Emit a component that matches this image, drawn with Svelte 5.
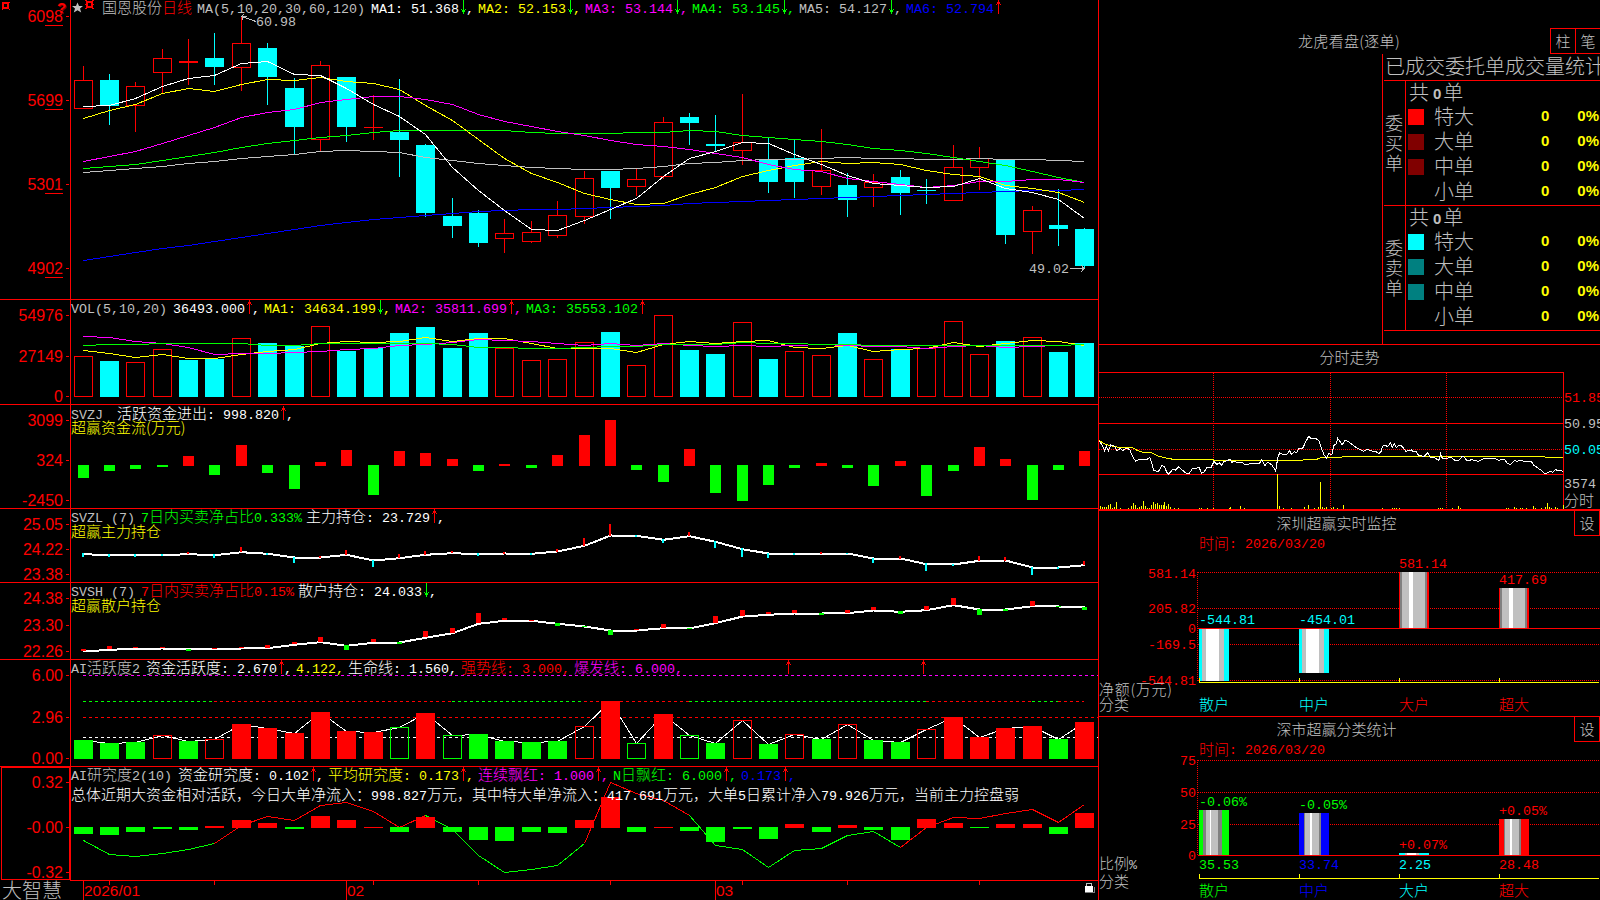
<script>
  const RED = '#ff0000';
  const GREEN = '#00ff00';
  const CYAN = '#00ffff';
  const YELLOW = '#ffff00';
  const MAGENTA = '#ff00ff';
  const BLUE = '#0000ff';
  const GRAY = '#c0c0c0';
  const WHITE = '#ffffff';

  // left edge of each trading day's 19px slot
  const X = [
    74, 100, 126, 153, 179, 205, 232, 258, 285, 311, 337, 364, 390, 416, 443, 469, 495, 522, 548, 575,
    601, 627, 654, 680, 706, 733, 759, 785, 812, 838, 864, 891, 917, 944, 970, 996, 1023, 1049, 1075
  ];

  // [color, high, body top, body bottom, low]
  const candles = [
    ['r', 66, 80, 109, 109], ['c', 74, 80, 106, 125], ['r', 82, 86, 106, 132], ['r', 49, 58, 73, 93],
    ['r', 39, 61, 63, 85], ['c', 33, 58, 67, 85], ['r', 17, 43, 68, 91], ['c', 43, 48, 77, 105],
    ['c', 78, 88, 127, 154], ['r', 61, 65, 140, 152], ['c', 77, 77, 127, 142], ['r', 95, 127, 128, 140],
    ['c', 79, 132, 140, 177], ['c', 144, 145, 213, 217], ['c', 198, 216, 226, 238], ['c', 210, 213, 243, 247],
    ['r', 219, 233, 239, 253], ['r', 221, 232, 242, 243], ['r', 201, 215, 236, 238], ['r', 171, 178, 217, 224],
    ['c', 171, 171, 188, 219], ['r', 169, 179, 187, 196], ['r', 117, 122, 177, 179], ['c', 113, 117, 123, 145],
    ['c', 115, 144, 146, 151], ['r', 94, 142, 151, 165], ['c', 137, 160, 182, 193], ['c', 139, 158, 182, 198],
    ['r', 129, 170, 187, 195], ['c', 173, 185, 200, 217], ['r', 174, 182, 188, 207], ['c', 170, 177, 193, 215],
    ['c', 179, 190, 191, 204], ['r', 145, 167, 201, 201], ['r', 147, 158, 168, 190], ['c', 160, 160, 235, 244],
    ['r', 206, 210, 232, 254], ['c', 189, 225, 229, 246], ['c', 228, 229, 266, 268]
  ];

  const priceLines = [
    { color: BLUE, ys: [260, 256, 252, 248, 245, 241, 237, 233, 229, 225, 222, 219, 217, 215, 213, 211, 210, 209, 209, 208, 207, 206, 205, 203, 202, 201, 200, 199, 198, 197, 196, 195, 194, 193, 192, 191, 190, 190, 189] },
    { color: GRAY, ys: [172, 170, 168, 166, 163, 161, 158, 156, 154, 151, 150, 151, 152, 157, 160, 163, 165, 167, 168, 169, 169, 168, 166, 163, 162, 160, 159, 159, 158, 157, 158, 158, 159, 159, 158, 159, 159, 160, 161] },
    { color: GREEN, ys: [168, 166, 164, 160, 156, 152, 147, 143, 140, 137, 135, 132, 130, 130, 130, 130, 130, 132, 133, 133, 133, 132, 132, 130, 131, 135, 137, 139, 141, 144, 148, 150, 153, 157, 161, 165, 171, 177, 182] },
    { color: YELLOW, ys: [118, 110, 104, 93, 88, 91, 84, 79, 80, 77, 81, 83, 89, 105, 120, 139, 158, 173, 182, 193, 199, 204, 203, 194, 187, 176, 170, 165, 161, 163, 162, 164, 170, 174, 176, 185, 188, 192, 202] },
    { color: MAGENTA, ys: [161, 156, 151, 143, 135, 127, 117, 112, 109, 102, 99, 96, 96, 99, 104, 114, 121, 126, 131, 135, 140, 144, 146, 149, 153, 157, 164, 169, 171, 178, 181, 184, 187, 185, 181, 181, 179, 179, 182] },
    { color: WHITE, ys: [106, 105, 98, 86, 78, 75, 63, 61, 74, 75, 88, 104, 116, 134, 167, 190, 210, 229, 230, 220, 209, 198, 176, 158, 151, 142, 143, 154, 164, 175, 183, 185, 187, 186, 178, 188, 192, 199, 218] }
  ];

  const volColors = 'rcrrccrccrccccccrrrrcrrccrcrrcrcrrrcrcc';
  const volTops = [356, 361, 362, 349, 360, 359, 338, 343, 346, 326, 351, 348, 333, 327, 348, 333, 348, 360, 359, 342, 332, 365, 315, 350, 354, 322, 359, 351, 355, 333, 359, 349, 348, 321, 354, 341, 337, 352, 343];
  const volLines = [
    { color: YELLOW, ys: [350, 353, 357, 354, 358, 358, 354, 351, 349, 343, 341, 342, 341, 337, 341, 338, 338, 343, 348, 348, 348, 352, 344, 341, 343, 341, 340, 347, 348, 345, 351, 349, 348, 342, 346, 343, 340, 341, 345] },
    { color: MAGENTA, ys: [336, 337, 341, 343, 347, 354, 353, 353, 352, 351, 349, 348, 345, 344, 342, 339, 340, 341, 343, 345, 343, 345, 343, 345, 346, 345, 346, 345, 344, 345, 346, 346, 348, 346, 345, 347, 346, 345, 344] },
    { color: GREEN, ys: [345, 344, 344, 343, 343, 343, 343, 345, 345, 343, 343, 343, 343, 343, 344, 347, 347, 348, 348, 347, 346, 346, 344, 344, 344, 342, 343, 343, 344, 344, 345, 345, 345, 345, 345, 345, 345, 345, 344] }
  ];

  // tip of each bar, above or below the zero line at 465
  const flow = [478, 471, 469, 467, 456, 475, 445, 473, 489, 462, 450, 495, 451, 453, 459, 471, 464, 468, 455, 435, 420, 470, 482, 449, 493, 501, 485, 468, 463, 468, 486, 461, 496, 471, 447, 459, 500, 470, 451];

  const mainLine = [553.7, 554.7, 554.7, 554.7, 553.7, 554.7, 551.7, 553.3, 557, 557, 554.3, 560, 557.7, 554.3, 552.7, 553.7, 553, 553.3, 551, 545.3, 535, 535.3, 539.3, 535.7, 541.3, 548.7, 553, 553, 553, 553, 558, 558, 563.7, 564, 560.3, 560, 567, 567, 564.7];
  const mainTips = [557, 557, 557, 556, 552, 558, 547, 555, 563, 556, 550, 567, 554, 551, 551, 556, 552, 555, 549, 538, 524, 537, 543, 532, 548, 557, 558, 555, 552, 554, 563, 556, 571, 566, 556, 557, 575, 569, 561];
  const mainColors = 'ccccrcrccrrcrrrcrcrrrccrccccrccrccrrccr';

  const retailLine = [651, 649.3, 648.3, 648, 649, 648.7, 648, 647.7, 644.3, 641.7, 645.3, 642.3, 642, 637.3, 632.7, 623.3, 620.3, 620.3, 623.3, 626, 630, 630, 627.7, 628, 622.7, 616, 614.3, 613, 613, 612.7, 610, 611.3, 609.7, 604.7, 609, 609, 605.7, 606, 607];
  const retailTips = [649, 646, 647, 647, 651, 648, 647, 645, 642, 637, 650, 639, 644, 631, 628, 613, 618, 620, 626, 626, 635, 629, 624, 629, 616, 610, 612, 610, 615, 610, 607, 614, 606, 598, 615, 611, 601, 607, 610];
  const retailColors = 'rrrrgrrrrrgrgrrrrrgggrrgrrrrgrrgrrggrgg';

  // upper case is filled, lower case is outlined
  const activeKinds = 'GGGrGrRRRRRRgRgGGGGrRgRgGrGrGrGGrRRRRGR';
  const activeTops = [740, 743, 742, 735, 741, 739, 724, 728, 733, 712, 731, 732, 727, 713, 735, 734, 741, 742, 741, 726, 701, 743, 714, 735, 743, 720, 744, 734, 739, 724, 740, 742, 729, 717, 737, 728, 726, 739, 722];
  const activeBands = [
    [83, 214, GREEN], [214, 452, RED], [452, 584, GREEN], [584, 689, RED],
    [689, 926, GREEN], [926, 1032, RED], [1032, 1058, GREEN], [1058, 1084, RED]
  ];

  const researchTips = [834, 835, 832, 829, 830, 826, 820, 823, 829, 816, 820, 827, 832, 817, 832, 840, 841, 832, 833, 820, 797, 832, 827, 831, 842, 829, 839, 824, 832, 825, 830, 840, 819, 823, 828, 824, 824, 834, 813];
  const researchLine = [840, 854, 856, 853, 849, 843, 825, 816, 820, 805, 802, 811, 827, 815, 829, 855, 872, 869, 865, 843, 782, 793, 800, 815, 845, 849, 867, 850, 848, 835, 831, 847, 827, 817, 818, 813, 809, 822, 804];
  const researchParts = [[0, 5, GREEN], [5, 13, RED], [13, 19, GREEN], [19, 23, RED], [23, 31, GREEN], [31, 38, RED]];

  // intraday samples in thirds of a pixel, measured from (1096, 420)
  const intraday = '10,62 18,75 26,92 31,78 37,93 44,75 55,78 62,92 74,85 80,92 90,85 101,88 110,110 119,124 130,118 145,120 155,117 161,112 165,122 173,151 185,155 191,150 197,137 206,140 212,157 218,163 230,148 238,150 248,140 258,150 270,159 280,160 290,145 298,147 309,141 317,160 325,155 333,143 345,143 354,124 363,133 370,128 376,136 384,125 398,120 402,117 407,127 415,124 425,129 438,126 446,134 465,131 490,130 497,120 507,136 516,126 528,135 539,153 545,115 551,98 560,103 574,102 581,92 586,103 595,95 602,99 608,86 620,85 628,68 638,49 645,56 656,54 668,61 675,82 684,104 691,114 698,101 708,103 713,76 720,73 725,55 733,66 738,76 747,61 757,64 770,75 782,83 802,94 814,88 827,93 839,94 847,100 854,98 860,78 867,75 875,80 884,68 889,82 895,70 901,82 908,76 917,78 930,94 946,90 952,95 959,93 967,105 976,107 983,110 995,98 1002,112 1015,112 1028,122 1034,101 1039,115 1051,117 1058,113 1063,111 1077,121 1090,120 1098,109 1104,110 1113,123 1127,119 1147,124 1162,116 1182,117 1197,115 1207,121 1217,119 1226,118 1232,128 1242,134 1257,121 1262,124 1274,120 1287,126 1300,124 1307,126 1314,136 1327,145 1337,152 1347,162 1357,157 1364,153 1370,157 1379,149 1387,152 1397,151 1401,157';
  const average = '10,62 30,74 45,77 62,81 108,82 125,92 140,97 165,98 185,108 210,114 232,118 352,118 354,121 620,121 625,118 662,118 675,113 738,112 739,109 1346,109 1348,112 1401,112';
  const ticks = [
    [13, 3], [19, 2], [25, 2], [31, 2], [37, 4], [43, 5], [49, 1], [55, 2], [61, 7], [73, 1], [97, 1], [106, 3], [112, 6], [118, 4],
    [124, 1], [130, 2], [136, 3], [142, 8], [148, 3], [154, 1], [160, 1], [166, 4], [172, 7], [178, 5], [184, 6], [190, 4], [196, 4],
    [202, 4], [205, 7], [211, 3], [217, 5], [223, 2], [235, 1], [247, 1], [311, 1], [317, 1], [334, 1], [352, 1], [400, 1], [403, 2],
    [433, 3], [445, 1], [544, 35], [550, 3], [562, 1], [586, 1], [625, 2], [637, 4], [655, 1], [667, 2], [673, 27], [679, 2], [685, 1],
    [691, 2], [706, 1], [712, 2], [724, 1], [742, 4], [859, 1], [889, 1], [895, 1], [901, 1], [910, 1], [1027, 1], [1033, 1], [1039, 1],
    [1069, 1], [1087, 3], [1093, 1], [1231, 1], [1237, 1], [1255, 2], [1261, 1], [1273, 1], [1279, 1], [1291, 1], [1312, 3], [1318, 1],
    [1336, 1], [1348, 2], [1354, 6], [1360, 2], [1366, 1], [1378, 2], [1384, 1], [1401, 4]
  ];

  const orders = [
    { side: '委买单', rows: [['特大', '#ff0000'], ['大单', '#800000'], ['中单', '#800000'], ['小单', '']] },
    { side: '委卖单', rows: [['特大', '#00ffff'], ['大单', '#008080'], ['中单', '#008080'], ['小单', '']] }
  ];

  // cylinder shading: [width, color] stripes from left to right, 30px in total
  const D = '#808080';
  const netBars = [
    { x: 1199, y: 629, h: 52, name: '散户', value: '-544.81', ly: 624, color: CYAN, stripes: [[3, CYAN], [4, GRAY], [13, WHITE], [5, GRAY], [5, CYAN]] },
    { x: 1299, y: 629, h: 44, name: '中户', value: '-454.01', ly: 624, color: CYAN, stripes: [[3, CYAN], [4, GRAY], [13, WHITE], [5, GRAY], [5, CYAN]] },
    { x: 1399, y: 572, h: 56, name: '大户', value: '581.14', ly: 568, color: RED, stripes: [[1, RED], [2, D], [7, GRAY], [4, WHITE], [12, GRAY], [2, D], [2, RED]] },
    { x: 1499, y: 588, h: 40, name: '超大', value: '417.69', ly: 584, color: RED, stripes: [[1, RED], [2, D], [7, GRAY], [4, WHITE], [12, GRAY], [2, D], [2, RED]] }
  ];
  const shareBars = [
    { x: 1199, y: 810, name: '散户', value: '35.53', change: '-0.06%', ly: 806, color: GREEN, tint: GREEN, stripes: [[4, GREEN], [3, D], [4, GRAY], [1, WHITE], [7, GRAY], [4, D], [7, GREEN]] },
    { x: 1299, y: 813, name: '中户', value: '33.74', change: '-0.05%', ly: 809, color: BLUE, tint: GREEN, stripes: [[5, BLUE], [1, D], [5, GRAY], [2, WHITE], [7, GRAY], [2, D], [8, BLUE]] },
    { x: 1399, y: 853, name: '大户', value: '2.25', change: '+0.07%', ly: 849, color: CYAN, tint: RED, stripes: [[6, CYAN], [2, GRAY], [9, WHITE], [3, GRAY], [10, CYAN]] },
    { x: 1499, y: 819, name: '超大', value: '28.48', change: '+0.05%', ly: 815, color: RED, tint: RED, stripes: [[5, RED], [1, D], [5, GRAY], [2, WHITE], [7, GRAY], [2, D], [8, RED]] }
  ];

  const fill = { r: RED, c: CYAN, g: GREEN };

  function points( ys, from = 0, to = ys.length - 1 ) {
    return ys.slice( from, to + 1 ).map( ( y, i ) => `${X[from + i] + 9.5},${y + 0.5}` ).join( ' ' );
  }

  // latin runs and CJK runs are set at different sizes
  function runs( text ) {
    return text.split( /([\u0020-\u00ff]+)/ ).filter( Boolean ).map( part => ( { part, cjk: part.charCodeAt( 0 ) > 255 } ) );
  }

  function stack( stripes ) {
    let at = 0;
    return stripes.map( ( [w, color] ) => {
      const stripe = { at, w, color };
      at += w;
      return stripe;
    } );
  }
</script>

{#snippet mixed(text)}{#each runs( text ) as run}<span class:cjk={run.cjk}>{run.part}</span>{/each}{/snippet}

{#snippet item(text, color, dir = '')}
  <span class="item {color}">{@render mixed( text )}{#if dir}<svg class="arrow" width="7" height="14" viewBox="0 0 7 14">
      {#if dir === 'up'}
        <path d="M4 0h1v14h-1zM3 2h3v2h-3zM2 4h1v1h-1zM6 4h1v1h-1z" fill={RED} />
      {:else}
        <path d="M4 0h1v14h-1zM3 10h3v2h-3zM2 9h1v1h-1zM6 9h1v1h-1z" fill={GREEN} />
      {/if}
    </svg>{/if}</span>
{/snippet}

{#snippet axis(top, height, labels)}
  <rect x="70" y={top} width="1" height={height} fill={RED} />
  {#each labels as [text, y]}
    <text class="scale" x="63" y={y}>{text}</text>
    <rect x="66" y={y - 6} width="3" height="1" fill={RED} />
  {/each}
{/snippet}

{#snippet cylinder(x, y, h, stripes)}
  {#each stack( stripes ) as s}
    <rect x={x + s.at} y={y} width={s.w} height={h} fill={s.color} />
  {/each}
{/snippet}

<main>
  <div class="left">
    <section class="panel price">
      <svg viewBox="0 0 1098 299" width="1098" height="299">
        {@render axis( 0, 299, [['6098', 22], ['5699', 106], ['5301', 190], ['4902', 274]] )}
        {#each [25, 109, 193, 277] as y}
          <rect x="45" y={y} width="18" height="1" fill={RED} />
        {/each}
        <path d="M2 2h7v7h-7zM4 4v3h3v-3z" fill={RED} fill-rule="evenodd" />
        <path d="M2 9h1v1h-1zM9 9h1v1h-1zM9 2h1v1h-1z" fill={RED} />
        <text class="help dark" x="58" y="14">?</text>
        <text class="help" x="57" y="13">?</text>
        {#each candles as [kind, high, top, bottom, low], i}
          {@const body = bottom - top}
          <rect x={X[i] + 9} y={high} width="1" height={top - high} fill={fill[kind]} />
          <rect x={X[i] + 9} y={bottom} width="1" height={low - bottom} fill={fill[kind]} />
          {#if kind === 'c' || body < 3}
            <rect x={X[i]} y={top} width="19" height={body} fill={fill[kind]} />
          {:else}
            <rect x={X[i] + 0.5} y={top + 0.5} width="18" height={body - 1} class="hollow" stroke={RED} />
          {/if}
        {/each}
        {#each priceLines as line}
          <polyline points={points( line.ys )} stroke={line.color} />
        {/each}
        <path d="M241.500 16.500L256 21.500M241.500 16.500h5M242.500 16.500v3M242 16l2-2" stroke={GRAY} />
        <text class="mono" x="256" y="26" fill={GRAY}>60.98</text>
        <text class="mono" x="1029" y="273" fill={GRAY}>49.02</text>
        <path d="M1070 268.500h14M1081 265l3 3.500-3 3.500" stroke={GRAY} />
      </svg>
      <header>
        <svg class="marks" width="27" height="14" viewBox="71 0 27 14">
          <path class="star" d="M77.500 2.500l1.500 3.500h4l-3 2.500 1.200 4-3.700-2.300-3.700 2.300 1.200-4-3-2.500h4z" fill={GRAY} />
          <path d="M86 1h7v7h-7zM88 3v3h3v-3z" fill={RED} fill-rule="evenodd" />
          <path d="M85 0h2v1h-2zM92 0h2v1h-2zM85 8h2v1h-2zM92 8h2v1h-2zM85 4h1v1h-1zM93 4h1v1h-1z" fill={RED} />
        </svg>
        <span class="stock">{@render mixed( '国恩股份' )}<i>{@render mixed( '日线' )}</i></span>
        <span class="name">{@render mixed( 'MA(5,10,20,30,60,120)' )}</span>
        {@render item( 'MA1: 51.368', 'white comma', 'down' )}
        {@render item( 'MA2: 52.153', 'yellow comma', 'down' )}
        {@render item( 'MA3: 53.144', 'magenta comma', 'down' )}
        {@render item( 'MA4: 53.145', 'green comma', 'down' )}
        {@render item( 'MA5: 54.127', 'gray comma', 'down' )}
        {@render item( 'MA6: 52.794', 'blue', 'up' )}
      </header>
    </section>

    <section class="panel volume">
      <svg viewBox="0 300 1098 104" width="1098" height="104">
        {@render axis( 300, 104, [['54976', 321], ['27149', 362], ['0', 402]] )}
        {#each volTops as top, i}
          {#if volColors[i] === 'c'}
            <rect x={X[i]} y={top} width="19" height={397 - top} fill={CYAN} />
          {:else}
            <rect x={X[i] + 0.5} y={top + 0.5} width="18" height={396 - top} class="hollow" stroke={RED} />
          {/if}
        {/each}
        {#each volLines as line}
          <polyline points={points( line.ys )} stroke={line.color} />
        {/each}
      </svg>
      <header>
        <span class="name">{@render mixed( 'VOL(5,10,20)' )}</span>
        {@render item( '36493.000', 'white comma', 'up' )}
        {@render item( 'MA1: 34634.199', 'yellow comma', 'down' )}
        {@render item( 'MA2: 35811.699', 'magenta comma', 'up' )}
        {@render item( 'MA3: 35553.102', 'green', 'up' )}
      </header>
    </section>

    <section class="panel flow">
      <svg viewBox="0 405 1098 103" width="1098" height="103">
        {@render axis( 405, 103, [['3099', 426], ['324', 466], ['-2450', 506]] )}
        {#each flow as tip, i}
          {#if tip > 465}
            <rect x={X[i] + 4} y="465" width="11" height={tip - 465} fill={GREEN} />
          {:else}
            <rect x={X[i] + 4} y={tip} width="11" height={466 - tip} fill={RED} />
          {/if}
        {/each}
      </svg>
      <header>
        <span class="name">{@render mixed( 'SVZJ ' )}</span>
        {@render item( '活跃资金进出: 998.820', 'white comma', 'up' )}
        <p class="yellow"><span class="cjk">超赢资金流(万元)</span></p>
      </header>
    </section>

    <section class="panel main-holding">
      <svg viewBox="0 509 1098 73" width="1098" height="73">
        {@render axis( 509, 73, [['25.05', 530], ['24.22', 555], ['23.38', 580]] )}
        <polyline class="thick" points={points( mainLine )} stroke={WHITE} />
        {#each mainTips as tip, i}
          <rect x={X[i] + 8} y={Math.min( tip, mainLine[i] - 0.5 )} width="2" height={Math.max( 1, Math.abs( tip - mainLine[i] ) + 0.5 )} fill={fill[mainColors[i]]} />
        {/each}
      </svg>
      <header>
        <span class="name">{@render mixed( 'SVZL (7)' )}</span>
        {@render item( '7日内买卖净占比0.333%', 'green' )}
        {@render item( '主力持仓: 23.729', 'white comma', 'up' )}
        <p class="yellow">{@render mixed( '超赢主力持仓' )}</p>
      </header>
    </section>

    <section class="panel retail-holding">
      <svg viewBox="0 583 1098 76" width="1098" height="76">
        {@render axis( 583, 76, [['24.38', 604], ['23.30', 631], ['22.26', 657]] )}
        <polyline class="thick" points={points( retailLine )} stroke={WHITE} />
        {#each retailTips as tip, i}
          <rect x={X[i] + 7} y={Math.min( tip, retailLine[i] )} width="5" height={Math.max( 1, Math.abs( tip - retailLine[i] ) )} fill={fill[retailColors[i]]} />
        {/each}
      </svg>
      <header>
        <span class="name">{@render mixed( 'SVSH (7)' )}</span>
        {@render item( '7日内买卖净占比0.15%', 'red' )}
        {@render item( '散户持仓: 24.033', 'white comma', 'down' )}
        <p class="yellow">{@render mixed( '超赢散户持仓' )}</p>
      </header>
    </section>

    <section class="panel activity">
      <svg viewBox="0 660 1098 106" width="1098" height="106">
        {@render axis( 660, 106, [['6.00', 681], ['2.96', 723], ['0.00', 764]] )}
        <g stroke-dasharray="3 3">
          <path d="M83 675.500H1098" stroke={MAGENTA} />
          <path d="M83 717.500H1098" stroke={RED} />
          <path d="M83 737.500H1098" stroke={WHITE} />
          {#each activeBands as [from, to, color]}
            <path d="M{from} 701.500H{to}" stroke={color} />
          {/each}
        </g>
        <polyline points={points( activeTops )} stroke={WHITE} />
        {#each activeTops as top, i}
          {@const kind = activeKinds[i]}
          {@const color = fill[kind.toLowerCase()]}
          {#if kind === kind.toUpperCase()}
            <rect x={X[i]} y={top} width="19" height={759 - top} fill={color} />
          {:else}
            <rect x={X[i] + 0.5} y={top + 0.5} width="18" height={758 - top} class="hollow" stroke={color} />
          {/if}
        {/each}
        {#each [788, 923] as x}
          <path transform="translate({x - 4} 660)" d="M4 0h1v14h-1zM3 2h3v2h-3zM2 4h1v1h-1zM6 4h1v1h-1z" fill={RED} />
        {/each}
      </svg>
      <header>
        <span class="name">{@render mixed( 'AI活跃度2' )}</span>
        {@render item( '资金活跃度: 2.670', 'white comma', 'up' )}
        {@render item( '4.122', 'yellow comma' )}
        {@render item( '生命线: 1.560', 'white comma' )}
        {@render item( '强势线: 3.000', 'red comma' )}
        {@render item( '爆发线: 6.000', 'magenta comma' )}
      </header>
    </section>

    <section class="panel research">
      <svg viewBox="0 767 1098 113" width="1098" height="113">
        {@render axis( 767, 113, [['0.32', 788], ['-0.00', 833], ['-0.32', 878]] )}
        <rect x="1.5" y="767.5" width="68" height="112" class="hollow" stroke={RED} />
        {#each researchParts as [from, to, color]}
          <polyline points={points( researchLine, from, to )} stroke={color} />
        {/each}
        {#each researchTips as tip, i}
          {#if tip > 827}
            <rect x={X[i]} y="827" width="19" height={tip - 827} fill={GREEN} />
          {:else}
            <rect x={X[i]} y={tip} width="19" height={828 - tip} fill={RED} />
          {/if}
        {/each}
      </svg>
      <header>
        <span class="name">{@render mixed( 'AI研究度2(10)' )}</span>
        {@render item( '资金研究度: 0.102', 'white comma', 'up' )}
        {@render item( '平均研究度: 0.173', 'yellow comma', 'up' )}
        {@render item( '连续飘红: 1.000', 'magenta comma', 'up' )}
        {@render item( 'N日飘红: 6.000', 'green comma', 'up' )}
        {@render item( '0.173', 'blue comma', 'up' )}
        <p class="summary">{@render mixed( '总体近期大资金相对活跃，今日大单净流入：998.827万元，其中特大单净流入：417.691万元，大单5日累计净入79.926万元，当前主力控盘弱' )}</p>
      </header>
    </section>

    <footer>
      <span class="brand">大智慧</span>
      <svg viewBox="70 880 1028 20" width="1028" height="20">
        <rect x="70" y="880" width="1028" height="1" fill={RED} />
        {#each [[83, '2026/01'], [346, '02'], [715, '03']] as [x, label]}
          <rect x={x} y="880" width="1" height="20" fill={RED} />
          <text class="date" x={x + 1} y="896">{label}</text>
        {/each}
        {#each [109, 214, 373, 478, 610, 742, 847, 979] as x}
          <rect x={x} y="880" width="1" height="5" fill={RED} />
        {/each}
        <path d="M1086.500 886v-2.500h5v2.500" stroke={GRAY} />
        <rect x="1085" y="886" width="8" height="6" fill={WHITE} />
        <path d="M1085 892.500h9.500v-5.500" stroke="#808080" />
      </svg>
    </footer>
  </div>

  <div class="right">
    <section class="dragon">
      <h2>龙虎看盘(逐单)</h2>
      <nav><button>柱</button><button>笔</button></nav>
      <div class="stats">
        <h3>已成交委托单成交量统计</h3>
        {#each orders as group}
          <div class="group">
            <div class="side">
              {#each group.side as ch}<span>{ch}</span>{/each}
            </div>
            <div class="rows">
              <div class="total">共<b>0</b>单</div>
              {#each group.rows as [label, color]}
                <div class="row">
                  <i style:background={color}></i>
                  <span>{label}</span>
                  <b>0</b>
                  <b class="pct">0%</b>
                </div>
              {/each}
            </div>
          </div>
        {/each}
      </div>
    </section>

    <section class="trend">
      <h2>分时走势</h2>
      <svg viewBox="1099 372 501 137" width="501" height="137">
        <g fill={RED}>
          <rect x="1099" y="372" width="465" height="1" />
          <rect x="1099" y="423" width="465" height="1" />
          <rect x="1099" y="474" width="465" height="1" />
          <rect x="1563" y="372" width="1" height="137" />
        </g>
        <g stroke={RED} stroke-dasharray="1 1">
          <path d="M1099 397.500H1563" />
          <path d="M1099 449.500H1563" />
          <path d="M1213.500 373V509" />
          <path d="M1330.500 373V509" />
          <path d="M1446.500 373V509" />
        </g>
        {#each ticks as [x, h]}
          <rect x={1096 + Math.floor( x / 3 )} y={509 - h} width="1" height={h} fill={YELLOW} />
        {/each}
        <g class="tape" transform="translate(1096 420) scale(0.33333)">
          <polyline points={average} stroke={YELLOW} />
          <polyline points={intraday} stroke={WHITE} />
        </g>
        <text class="mono" x="1564" y="402" fill={RED}>51.85</text>
        <text class="mono" x="1564" y="428" fill={GRAY}>50.95</text>
        <text class="mono" x="1564" y="454" fill={CYAN}>50.05</text>
        <text class="mono" x="1564" y="488" fill={GRAY}>3574</text>
        <text class="han" x="1564" y="506" fill={GRAY}>分时</text>
      </svg>
    </section>

    <section class="monitor">
      <div class="bar"><h2>深圳超赢实时监控</h2><button>设</button></div>
      <svg viewBox="1099 536 501 180" width="501" height="180">
        <text class="han" x="1199" y="549" fill={RED}>时间</text>
        <text class="mono" x="1229" y="548" fill={RED}>: 2026/03/20</text>
        {#each [['581.14', 578], ['205.82', 613], ['0', 633], ['-169.5', 649], ['-544.81', 685]] as [text, y]}
          <text class="mono end" x="1196" y={y} fill={RED}>{text}</text>
        {/each}
        <g stroke={RED} stroke-dasharray="1 1">
          <path d="M1197.500 572V681" />
          {#each [572, 608, 644, 680] as y}
            <path d="M1198 {y + 0.5}H1600" />
          {/each}
        </g>
        {#each netBars as bar}
          {@render cylinder( bar.x, bar.y, bar.h, bar.stripes )}
          <text class="mono" x={bar.x} y={bar.ly} fill={bar.color}>{bar.value}</text>
          <rect x={bar.x} y="678" width="1" height="4" fill={YELLOW} />
          <text class="han" x={bar.x} y="710" fill={bar.color}>{bar.name}</text>
        {/each}
        <rect x="1198" y="628" width="402" height="1" fill={RED} />
        <rect x="1199" y="682" width="400" height="1" fill={YELLOW} />
        <text class="han" x="1099" y="695" fill={GRAY} textLength="73">净额(万元)</text>
        <text class="han" x="1099" y="710" fill={GRAY}>分类</text>
      </svg>
    </section>

    <section class="share">
      <div class="bar"><h2>深市超赢分类统计</h2><button>设</button></div>
      <svg viewBox="1099 742 501 158" width="501" height="158">
        <text class="han" x="1199" y="755" fill={RED}>时间</text>
        <text class="mono" x="1229" y="754" fill={RED}>: 2026/03/20</text>
        {#each [['75', 765], ['50', 797], ['25', 829], ['0', 860]] as [text, y]}
          <text class="mono end" x="1196" y={y} fill={RED}>{text}</text>
        {/each}
        <g stroke={RED} stroke-dasharray="1 1">
          <path d="M1197.500 760V855" />
          {#each [760, 792, 824] as y}
            <path d="M1198 {y + 0.5}H1600" />
          {/each}
        </g>
        {#each shareBars as bar}
          {@render cylinder( bar.x, bar.y, 855 - bar.y, bar.stripes )}
          <text class="mono" x={bar.x} y={bar.ly} fill={bar.tint}>{bar.change}</text>
          <text class="mono" x={bar.x} y="869" fill={bar.color}>{bar.value}</text>
          <rect x={bar.x} y="874" width="1" height="4" fill={YELLOW} />
          <text class="han" x={bar.x} y="896" fill={bar.color}>{bar.name}</text>
        {/each}
        <rect x="1198" y="855" width="402" height="1" fill={RED} />
        <rect x="1199" y="878" width="400" height="1" fill={YELLOW} />
        <text class="han" x="1099" y="869" fill={GRAY}>比例</text>
        <text class="mono" x="1129" y="869" fill={GRAY}>%</text>
        <text class="han" x="1099" y="887" fill={GRAY}>分类</text>
      </svg>
    </section>
  </div>
</main>

<style>
  :global(body) {
    background: #000;
    margin: 0;
    overflow: hidden;
  }

  main {
    background: #000;
    color: #c0c0c0;
    display: flex;
    font-family: 'Liberation Mono', monospace;
    font-size: 13.33px;
    height: 900px;
    overflow: hidden;
    width: 1600px;
  }

  svg {
    display: block;
    shape-rendering: crispEdges;
  }

  polyline,
  path[stroke],
  .hollow {
    fill: none;
    stroke-width: 1;
  }

  .thick {
    stroke-width: 2;
  }

  .star {
    shape-rendering: geometricPrecision;
  }

  .tape polyline {
    vector-effect: non-scaling-stroke;
  }

  .cjk,
  .han {
    font-family: 'Noto Sans CJK SC', sans-serif;
    font-size: 15px;
    font-weight: 300;
  }

  /* keeps the tall CJK box from moving the row's baseline */
  .cjk {
    line-height: 0;
  }

  .mono {
    font-family: 'Liberation Mono', monospace;
    font-size: 13.33px;
  }

  .end {
    text-anchor: end;
  }

  .scale {
    fill: #f00;
    font: 16px 'Liberation Sans', sans-serif;
    text-anchor: end;
  }

  .date {
    fill: #f00;
    font: 15.5px 'Liberation Sans', sans-serif;
  }

  .help {
    fill: #f00;
    font: bold 15px 'Liberation Sans', sans-serif;
  }

  .help.dark {
    fill: #800000;
  }

  .left {
    border-right: 1px solid #f00;
    display: flex;
    flex-direction: column;
    width: 1098px;
  }

  .panel {
    border-bottom: 1px solid #f00;
    box-sizing: border-box;
    display: grid;
  }

  .price { height: 300px; }
  .volume { height: 105px; }
  .flow { height: 104px; }
  .main-holding { height: 74px; }
  .retail-holding { height: 77px; }
  .activity { height: 107px; }
  .research { border-bottom: 0; height: 113px; }

  .panel > svg,
  .panel > header {
    grid-area: 1 / 1;
  }

  header {
    align-content: start;
    display: flex;
    flex-wrap: wrap;
    line-height: 15px;
    padding: 2px 0 0 71px;
    white-space: pre;
  }

  header > span {
    height: 15px;
  }

  .flow header {
    padding-top: 3px;
  }

  .flow p {
    margin-top: -1px;
  }

  .marks {
    margin: -2px 4px 0 0;
  }

  .stock {
    margin-right: 5px;
  }

  .stock i {
    color: #f00;
    font-style: normal;
  }

  .name {
    margin-right: 6px;
  }

  .item {
    margin-right: 4px;
  }

  .comma::after {
    content: ',';
  }

  .arrow {
    display: inline-block;
    margin-top: -3px;
    vertical-align: -1px;
  }

  .white { color: #fff; }
  .yellow { color: #ff0; }
  .magenta { color: #f0f; }
  .green { color: #0f0; }
  .gray { color: #c0c0c0; }
  .blue { color: #00f; }
  .red { color: #f00; }

  p {
    flex-basis: 100%;
    height: 15px;
    margin: 0;
  }

  .summary {
    color: #fff;
    margin-top: 5px;
  }

  footer {
    display: flex;
    height: 20px;
  }

  .brand {
    box-sizing: border-box;
    font-family: 'Noto Sans CJK SC', sans-serif;
    font-size: 20px;
    font-weight: 300;
    line-height: 19px;
    padding-left: 2px;
    width: 70px;
  }

  .right {
    display: flex;
    flex-direction: column;
    width: 501px;
  }

  h2,
  h3 {
    font-family: 'Noto Sans CJK SC', sans-serif;
    font-size: 15px;
    font-weight: 300;
    margin: 0;
    text-align: center;
    white-space: nowrap;
  }

  button {
    background: #000;
    border: 1px solid #f00;
    box-sizing: border-box;
    color: #c0c0c0;
    font-family: 'Noto Sans CJK SC', sans-serif;
    font-size: 15px;
    font-weight: 300;
    height: 26px;
    line-height: 21px;
    padding: 0;
    width: 26px;
  }

  .dragon {
    border-bottom: 1px solid #f00;
    box-sizing: border-box;
    display: grid;
    grid-template-columns: 451px 50px;
    grid-template-rows: 26px;
    height: 345px;
    padding-top: 28px;
  }

  .dragon h2 {
    grid-area: 1 / 1;
    letter-spacing: 0.3px;
    line-height: 25px;
    padding-left: 49px;
  }

  nav {
    display: flex;
  }

  nav button {
    border-right: 0;
    flex: 0 0 25px;
    padding-bottom: 2px;
  }

  .stats {
    border-left: 1px solid #f00;
    grid-column: 1 / 3;
    height: 290px;
    margin-left: 283px;
    padding-left: 1px;
  }

  h3 {
    border-bottom: 1px solid #f00;
    font-size: 20px;
    height: 26px;
    line-height: 23px;
    overflow: hidden;
    padding-left: 1px;
    text-align: left;
  }

  .group {
    border-bottom: 1px solid #f00;
    display: flex;
    font-family: 'Noto Sans CJK SC', sans-serif;
    font-size: 20px;
    font-weight: 300;
    height: 124px;
  }

  .side {
    border-right: 1px solid #f00;
    box-sizing: border-box;
    display: flex;
    flex-direction: column;
    font-size: 18px;
    justify-content: center;
    line-height: 20px;
    padding: 0 0 3px 1px;
    width: 22px;
  }

  .rows {
    flex: 1;
  }

  .total {
    height: 23px;
    line-height: 21px;
    padding-left: 3px;
  }

  .rows b {
    font-family: 'Liberation Sans', sans-serif;
    font-size: 15px;
    font-weight: bold;
  }

  .total b {
    padding: 0 2px 0 4px;
    position: relative;
    top: -1px;
  }

  .row {
    align-items: center;
    display: flex;
    height: 25px;
    line-height: 23px;
  }

  .row i {
    height: 16px;
    margin: 0 10px 0 2px;
    width: 16px;
  }

  .row span {
    height: 25px;
    width: 107px;
  }

  .row b {
    color: #ff0;
    height: 25px;
  }

  .row .pct {
    margin-left: auto;
    padding-right: 1px;
  }

  .trend {
    border-bottom: 2px solid #f00;
    box-sizing: border-box;
    height: 166px;
  }

  .trend h2 {
    height: 27px;
    line-height: 23px;
  }

  .bar {
    display: flex;
  }

  .bar h2 {
    flex: 1;
    line-height: 24px;
  }

  .monitor {
    border-bottom: 1px solid #f00;
    box-sizing: border-box;
    height: 206px;
  }

  .bar button {
    border-top: 0;
    height: 25px;
    padding-bottom: 2px;
  }
</style>
